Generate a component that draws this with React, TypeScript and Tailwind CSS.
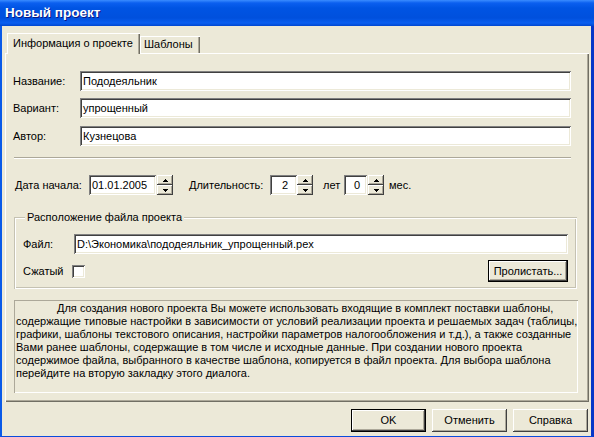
import React from 'react';

const raised =
  'bg-[#ECE9D8] shadow-[inset_-1px_-1px_#404040,inset_1px_1px_#fff,inset_-2px_-2px_#ACA899]';
const sunken =
  'bg-white shadow-[inset_1px_1px_#808080,inset_-1px_-1px_#fff,inset_2px_2px_#404040,inset_-2px_-2px_#ECE9D8]';

function Field({ value, className }: { value: string; className: string }) {
  return (
    <div className={`h-[20px] ${sunken} pl-[3px] flex items-center whitespace-nowrap overflow-hidden ${className}`}>
      {value}
    </div>
  );
}

function Arrow({ down }: { down?: boolean }) {
  return (
    <svg width="5" height="3" viewBox="0 0 5 3" className={down ? 'rotate-180' : ''}>
      <rect x="2" y="0" width="1" height="1" fill="#000" />
      <rect x="1" y="1" width="3" height="1" fill="#000" />
      <rect x="0" y="2" width="5" height="1" fill="#000" />
    </svg>
  );
}

function Spin({ className = '' }: { className?: string }) {
  return (
    <div className={`flex flex-col w-[16px] h-[20px] ${className}`}>
      <div className={`h-[10px] ${raised} flex items-center justify-center`}>
        <Arrow />
      </div>
      <div className={`h-[10px] ${raised} flex items-center justify-center`}>
        <Arrow down />
      </div>
    </div>
  );
}

function Button({ label, main, className = '' }: { label: string; main?: boolean; className?: string }) {
  return (
    <div className={`${main ? 'border border-black' : ''} ${className}`}>
      <div className={`h-full ${raised} flex items-center justify-center`}>{label}</div>
    </div>
  );
}

export default function App() {
  return (
    <div className="w-[594px] h-[437px] flex flex-col font-['Liberation_Sans',Arial,sans-serif] text-[11px] text-black overflow-hidden">
      <div className="h-[26px] shrink-0 flex items-center pl-[5px] bg-[linear-gradient(to_bottom,#3A8CFF_0px,#0B5FEF_3px,#0054E3_8px,#0050DD_18px,#0A5FF0_23px,#0047D0_26px)]">
        <span className="text-white font-bold text-[13.5px] [text-shadow:1px_1px_0_#0A1883]">Новый проект</span>
      </div>
      <div className="flex-1 flex flex-col bg-[#ECE9D8] border-l-2 border-l-[#0A5AE8] border-r-[3px] border-r-[#0636C8] border-b border-b-[#0A4CDC]">
        <div className="flex items-end h-[20px] ml-[5px] mt-[7px]">
          <div className="relative z-10 -mb-px h-[21px] w-[133px] pl-[6px] flex items-center bg-[#ECE9D8] shadow-[inset_1px_1px_#fff,inset_-1px_0_#716F64,inset_-2px_0_#ACA899]">
            Информация о проекте
          </div>
          <div className="h-[17px] w-[60px] pl-[4px] flex items-center bg-[#ECE9D8] shadow-[inset_1px_1px_#fff,inset_-1px_0_#716F64,inset_-2px_0_#ACA899]">
            Шаблоны
          </div>
        </div>

        <div className="ml-[3px] mr-[2px] h-[349px] flex flex-col shadow-[inset_1px_1px_#fff,inset_-1px_-1px_#716F64,inset_-2px_-2px_#ACA899]">
          <div className="flex items-center mt-[18px] ml-[8px]">
            <span className="w-[67px]">Название:</span>
            <Field value="Пододеяльник" className="w-[491px]" />
          </div>
          <div className="flex items-center mt-[7px] ml-[8px]">
            <span className="w-[67px]">Вариант:</span>
            <Field value="упрощенный" className="w-[491px]" />
          </div>
          <div className="flex items-center mt-[8px] ml-[8px]">
            <span className="w-[67px]">Автор:</span>
            <Field value="Кузнецова" className="w-[491px]" />
          </div>

          <div className="mt-[11px] ml-[9px] w-[557px] border-t border-t-[#ACA899] border-b border-b-white" />

          <div className="flex items-center mt-[16px] ml-[10px]">
            <span className="w-[74px]">Дата начала:</span>
            <Field value="01.01.2005" className="w-[67px]" />
            <Spin className="ml-[1px]" />
            <span className="ml-[16px] w-[81px]">Длительность:</span>
            <Field value="2" className="w-[27px] justify-center pl-0" />
            <Spin />
            <span className="ml-[10px] w-[21px]">лет</span>
            <Field value="0" className="w-[23px] justify-center pl-0" />
            <Spin className="ml-[1px]" />
            <span className="ml-[5px]">мес.</span>
          </div>

          <div className="relative mt-[22px] ml-[9px] w-[563px] h-[72px] flex flex-col shadow-[inset_1px_1px_#C5C2B2,inset_-1px_-1px_#fff,inset_2px_2px_#fff,inset_-2px_-2px_#C5C2B2]">
            <span className="absolute left-[11px] -top-[7px] px-[2px] bg-[#ECE9D8] leading-[14px]">
              Расположение файла проекта
            </span>
            <div className="flex items-center mt-[17px] ml-[9px]">
              <span className="w-[51px]">Файл:</span>
              <Field value="D:\Экономика\пододеяльник_упрощенный.pex" className="w-[494px]" />
            </div>
            <div className="flex items-center mt-[6px] ml-[9px] mr-[9px]">
              <span className="w-[49px]">Сжатый</span>
              <div className={`w-[13px] h-[13px] ${sunken}`} />
              <Button label="Пролистать..." main className="ml-auto w-[80px] h-[22px]" />
            </div>
          </div>

          <div className="mt-[11px] ml-[9px] w-[564px] h-[93px] pl-[2px] pt-[2px] leading-[13px] whitespace-nowrap shadow-[inset_1px_1px_#ACA899,inset_-1px_-1px_#fff]">
            <div className="pl-[41px]">
              Для создания нового проекта Вы можете использовать входящие в комплект поставки шаблоны,
            </div>
            <div>содержащие типовые настройки в зависимости от условий реализации проекта и решаемых задач (таблицы,</div>
            <div>графики, шаблоны текстового описания, настройки параметров налогообложения и т.д.), а также созданные</div>
            <div>Вами ранее шаблоны, содержащие в том числе и исходные данные. При создании нового проекта</div>
            <div>содержимое файла, выбранного в качестве шаблона, копируется в файл проекта. Для выбора шаблона</div>
            <div>перейдите на вторую закладку этого диалога.</div>
          </div>
        </div>

        <div className="flex justify-end gap-[6px] mt-[7px] mr-[3px]">
          <Button label="OK" main className="w-[75px] h-[23px]" />
          <Button label="Отменить" className="w-[75px] h-[23px]" />
          <Button label="Справка" className="w-[75px] h-[23px]" />
        </div>
      </div>
    </div>
  );
}
